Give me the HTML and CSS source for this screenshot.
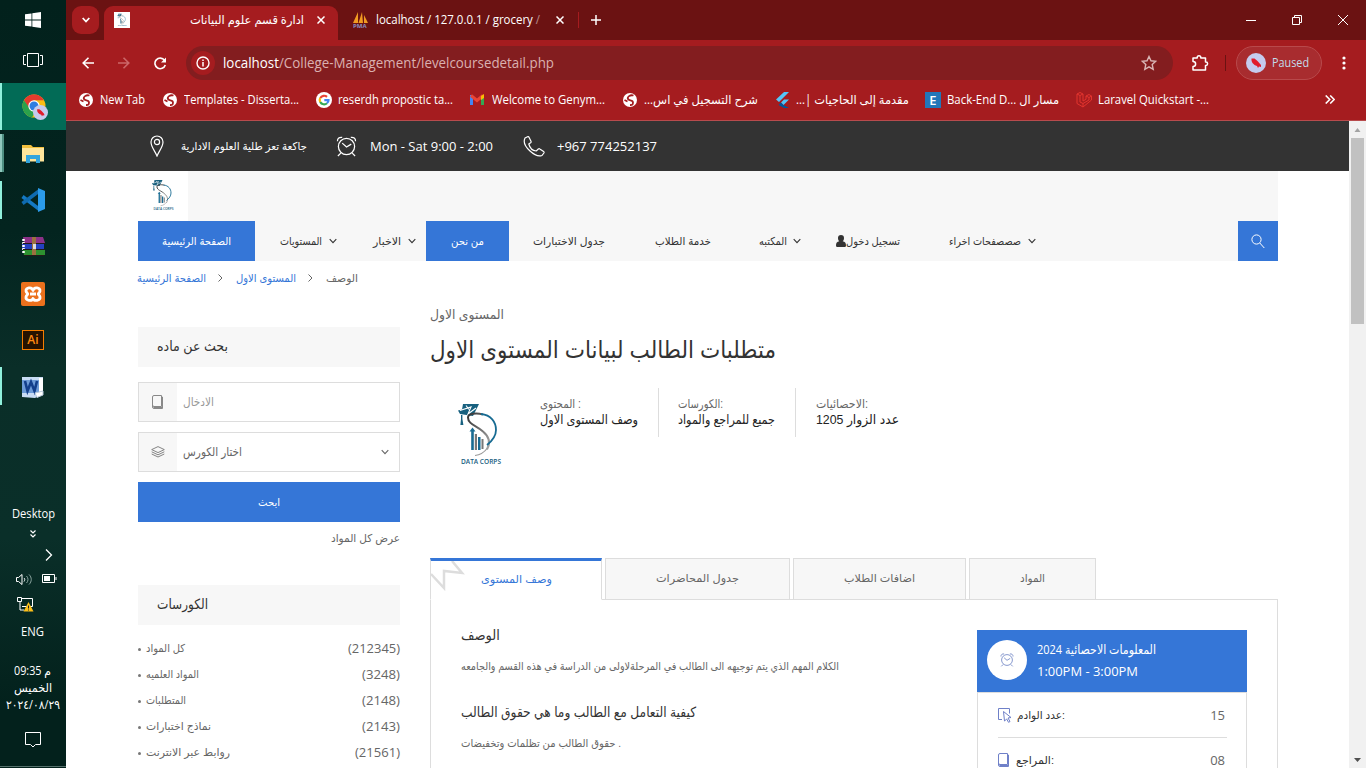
FILE: index.html
```html
<!DOCTYPE html>
<html lang="en">
<head>
<meta charset="utf-8">
<title>ادارة قسم علوم البيانات</title>
<link rel="stylesheet" href="styles.css">
</head>
<body>
<svg class="defs" width="0" height="0">
  <defs>
    <linearGradient id="grey" x1="0" x2="1" y2="1"><stop offset="0" stop-color="#333"/><stop offset="1" stop-color="#aaa"/></linearGradient>
    <symbol id="corps" viewBox="0 0 100 100">
      <path fill="#17607f" d="M33 18h16l-6 12-13-2-2-3.500 4-1z"/>
      <path fill="none" stroke="#fff" stroke-width="1.100" d="M30 24.500l11-3.500-3 7 8-6M36 19.500l3 4"/>
      <path fill="#17607f" d="M31 29h1.400v4l1 6h-3l.6-6z"/>
      <path fill="none" stroke="url(#grey)" stroke-width="2" d="M53 28.500c-7-2-15-1-15 3 0 7 9 8 15 14 6 5 8 11 4 18"/>
      <path fill="none" stroke="#999" stroke-width="1.200" d="M57.500 62c-3 4-7 7-12.500 7.500"/>
      <path fill="none" stroke="#176b92" stroke-width="1.800" d="M51 28c10 1 15 8 15 16 0 6-4 11-9 15"/>
      <path fill="#176b92" d="M42.500 41.500l-3 4h1.700V64h2.600V45.500h1.700zM48 51h2.500v13H48z"/>
      <path fill="#777" d="M44.800 48h2.200v16h-2.200zM51.500 53h2v10h-2z"/>
      <text x="31" y="77.700" font-family="Open Sans" font-weight="600" font-size="6.800" textLength="40" lengthAdjust="spacingAndGlyphs" fill="#17607f">DATA CORPS</text>
    </symbol>
    <symbol id="globe" viewBox="0 0 14 14">
      <circle cx="7" cy="7" r="7" fill="#fff"/>
      <path fill="none" stroke="#a51c1f" stroke-width="1.800" d="M10.500 2.500C7 1.500 4 4 5 6s5 .5 5 3.500-2 2.500-3 2.500M1.500 7l3 1.500"/>
    </symbol>
    <symbol id="clock" viewBox="0 0 22 22">
      <g fill="none" stroke="currentColor" stroke-width="1.300"><circle cx="11" cy="11" r="8.500"/><path d="M1.500 5.500c0-3 2-4.500 5-4M20.500 5.500c0-3-2-4.500-5-4M5 18l-3 3M17 18l3 3M6.500 7.500l4.500 4 5-3"/></g>
    </symbol>
    <symbol id="book" viewBox="0 0 12 14">
      <path fill="none" stroke="currentColor" d="M2 .5h7.500v11H2A1.500 1.500 0 0 1 .5 10V2A1.500 1.500 0 0 1 2 .5zM9.500 2h1v11.500H2A1.500 1.500 0 0 1 .5 12v-2M1.500 12.500h9"/>
    </symbol>
    <symbol id="down" viewBox="0 0 8 6"><path fill="none" stroke="currentColor" stroke-width="1.100" d="M.7 1.200L4 4.600l3.300-3.400"/></symbol>
    <symbol id="bird" viewBox="0 0 20 20"><circle cx="10" cy="10" r="10" fill="#c5cbee"/><path fill="#e11c2c" d="M5.500 5.500l3 0 3 2.500 3.500 4 0 2-2-.5-1 1.500-1-2c-3.500-1-6-4-5.500-7.500z"/></symbol>
    <symbol id="times" viewBox="0 0 8 8"><path stroke="currentColor" stroke-width="1.500" d="M.5.5l7 7M7.500.5l-7 7"/></symbol>
  </defs>
</svg>

<div class="desktop">
  <aside class="taskbar">
    <div class="sys"><svg width="16" height="16" viewBox="0 0 16 16"><path fill="#fff" d="M0 2.300L6.500 1.400v6.200H0zM7.300 1.300L16 0v7.600H7.300zM0 8.400h6.500v6.200L0 13.700zM7.300 8.400H16V16l-8.700-1.300z"/></svg></div>
    <div class="sys"><svg width="20" height="14" viewBox="0 0 20 14"><path fill="none" stroke="#fff" d="M4.500.5h11v13h-11zM3 2.500H.5v9H3M17 2.500h2.500v9H17"/></svg></div>
    <div class="app on"><svg width="26" height="26" viewBox="0 0 26 26"><circle cx="12" cy="12" r="11.500" fill="#f9bd14"/><path fill="#e33b2e" d="M2 6.300A11.500 11.500 0 0 1 22 6.300H12L7 15z"/><path fill="#2ba24c" d="M2 6.300L8 15l6 2-4 6.400A11.500 11.500 0 0 1 2 6.300z"/><circle cx="12" cy="12" r="5.700" fill="#fff"/><circle cx="12" cy="12" r="4.500" fill="#2f7de1"/><use href="#bird" x="11" y="11" width="15" height="15"/></svg></div>
    <div class="app half"><svg width="22" height="18" viewBox="0 0 22 18"><path fill="#f2c03e" d="M0 0h9l2 2h11v14H0z"/><path fill="#ffe59b" d="M0 3h22v13.500H0z"/><path fill="#33a5dd" d="M4 18v-8h14v8h-4v-4H8v4z"/></svg></div>
    <div class="app run"><svg width="24" height="24" viewBox="0 0 24 24"><path fill="none" stroke="#1479c4" stroke-width="3.500" d="M1.500 8.500L18 21"/><path fill="none" stroke="#0f6bb0" stroke-width="3.500" d="M1.500 15.500L18 3"/><path fill="#2b9bea" d="M17 0l7 3v18l-7 3z"/></svg></div>
    <div class="app"><svg width="24" height="20" viewBox="0 0 24 20"><path fill="#8c3188" d="M2 0h20l2 6H3z"/><path fill="#2540bf" d="M1 7h22v6H1z"/><path fill="#2d9130" d="M2 13h22v5H3z"/><path stroke="#fff" stroke-width="2.500" stroke-dasharray="2 1" d="M2.500 2v15"/><path stroke="#241a18" d="M2 6.500h22M2 12.500h22M3 18.500h20"/><path fill="#9b7140" d="M11 0h4v18h-4z"/><path fill="#ddd" d="M12 7h3v5h-3z"/></svg></div>
    <div class="app"><svg width="24" height="24" viewBox="0 0 24 24"><rect width="24" height="24" rx="2" fill="#ec711d"/><path fill="none" stroke="#fff" stroke-width="2.800" stroke-linejoin="round" d="M12 8.500C11 4.500 4.500 5.500 5 9c.3 2 1.700 2 1.700 3S5.300 13 5 15c-.5 4 6 4.500 7 1.500 1 3 7.500 2.500 7-1.500-.3-2-1.700-2-1.700-3S18.700 11 19 9c.5-3.500-6-4.500-7-.5zM9 12h6"/></svg></div>
    <div class="app"><span class="ai">Ai</span></div>
    <div class="app run"><svg width="22" height="22" viewBox="0 0 22 22"><path fill="#c9dcf4" d="M0 1h21v17l-8 4-13-1z"/><path fill="#6e9cd8" d="M0 4h17v13H0z"/><path fill="#fff" d="M17 2h4v16h-4z"/><path fill="none" stroke="#133f8c" stroke-width="2.600" d="M3 5l2.500 10L9 6l3.500 9L15 5"/><path fill="#fff" stroke="#b9c9dc" d="M13 17l8-2v4l-6 2.500z"/></svg></div>
    <div class="tray">
      <div class="tr desk"><span class="fit" data-w="43">Desktop</span></div>
      <div class="tr chev"><svg width="6" height="8" viewBox="0 0 6 8"><path fill="none" stroke="#fff" stroke-width="1.200" d="M.5.5L3 3 5.500.5M.5 4.500L3 7l2.500-2.500"/></svg></div>
      <div class="tr more"><svg width="8" height="12" viewBox="0 0 8 12"><path fill="none" stroke="#fff" stroke-width="1.300" d="M1 .5L6.500 6 1 11.500"/></svg></div>
      <div class="tr pair"><svg width="17" height="13" viewBox="0 0 17 13"><path fill="none" stroke="#fff" d="M.5 4.500h2L6 1.500v10l-3.500-3h-2z"/><path fill="none" stroke="#fff" d="M8 5c1 1 1 2 0 3.500"/><path fill="none" stroke="#8ba5a0" d="M10.500 3c2 2 2 5 0 7M13 1.500c3 3 3 7 0 10"/></svg><svg width="15" height="10" viewBox="0 0 15 10"><path fill="none" stroke="#fff" d="M.5.5h12v8H.5zM14 3v3"/><path fill="#fff" d="M2 2h6v5H2z"/></svg></div>
      <div class="tr net"><svg width="17" height="15" viewBox="0 0 17 15"><path fill="none" stroke="#fff" d="M5 1.500h10.500v8H5M3 5v8h4M.5.500h4v4h-4z"/><path fill="#fcc01a" d="M11.500 5l5 9.500h-10z"/><path stroke="#222" d="M11.500 8.500v3M11.500 12.500v1"/></svg></div>
      <div class="tr eng"><span class="fit" data-w="23">ENG</span></div>
      <div class="tr time"><span class="fit" data-w="37">09:35 م</span></div>
      <div class="tr day"><span class="fit" data-w="38">الخميس</span></div>
      <div class="tr date"><span class="fit" data-w="54">٢٠٢٤/٠٨/٢٩</span></div>
      <div class="tr note"><svg width="16" height="16" viewBox="0 0 16 16"><path fill="none" stroke="#fff" d="M.5.500h15v12h-5L8 15l-2.500-2.500h-5z"/></svg></div>
    </div>
  </aside>

  <main class="browser">
    <header class="tabstrip">
      <span class="tabmenu"><svg width="8" height="6"><path d="M.7 1l3.300 3.500L7.300 1" fill="none" stroke="#fff" stroke-width="1.800"/></svg></span>
      <div class="tab"><span class="fav"><svg width="16" height="16" viewBox="15 10 70 75"><use href="#corps" width="100" height="100"/></svg></span><span class="tabtitle"><span class="fit" data-w="114">ادارة قسم علوم البيانات</span></span><svg width="8" height="8"><use href="#times"/></svg></div>
      <div class="tab2"><svg width="17" height="16" viewBox="0 0 17 16"><path fill="#f19b22" d="M6 0L1 11h5zM10 0L6.500 11H11zM12 3l0 8h4z"/><text x="1" y="16" font-family="Open Sans" font-size="6" font-weight="700" fill="#8a8fc0">PMA</text></svg><span class="grocery"><span class="fit" data-w="164">localhost / 127.0.0.1 / grocery <i>/</i></span></span><svg width="8" height="8"><use href="#times"/></svg></div>
      <span class="divide"></span>
      <span class="newtab"><svg width="10" height="10"><path stroke="#fff" stroke-width="1.500" d="M5 0v10M0 5h10"/></svg></span>
      <div class="winctl"><svg width="10" height="10"><path stroke="#fff" d="M0 5.500h10"/></svg><svg width="10" height="10"><path fill="none" stroke="#fff" d="M.5 2.500h7v7h-7zM2.500 2V.5h7v7H8"/></svg><svg width="10" height="10"><path stroke="#fff" d="M0 0l10 10M10 0L0 10"/></svg></div>
    </header>
    <div class="toolbar">
      <div class="navbtns">
        <svg width="12" height="12"><path fill="none" stroke="#fff" stroke-width="1.600" d="M12 6H1.500M6.500.7L1.200 6l5.300 5.300"/></svg>
        <svg width="12" height="12"><path fill="none" stroke="#cb6768" stroke-width="1.600" d="M0 6h10.500M5.500.7L10.800 6l-5.300 5.300"/></svg>
        <svg width="13" height="13"><path fill="none" stroke="#fff" stroke-width="1.600" d="M10.500 3.200A5.300 5.300 0 1 0 11.300 8"/><path fill="#fff" d="M12 .5V5.500H7z"/></svg>
      </div>
      <div class="omnibox">
        <span class="info"><svg width="14" height="14"><circle cx="7" cy="7" r="6" fill="none" stroke="#fff" stroke-width="1.400"/><path stroke="#fff" stroke-width="1.500" d="M7 6v4.500M7 3.500V5"/></svg></span>
        <span class="fit url" data-w="331"><b>localhost</b>/College-Management/levelcoursedetail.php</span>
        <svg class="star" width="16" height="16" viewBox="0 0 16 16"><path fill="none" stroke="#d9b5b5" stroke-width="1.400" d="M8 1.500l2 4.300 4.700.5-3.500 3.200 1 4.800L8 11.800l-4.200 2.500 1-4.800L1.300 6.300 6 5.800z"/></svg>
      </div>
      <svg class="puzzle" width="18" height="18" viewBox="0 0 18 18"><path fill="none" stroke="#fff" stroke-width="1.500" stroke-linejoin="round" d="M2 4h4.200V3.500a1.800 1.800 0 0 1 3.600 0V4H14.500v4h.4a1.700 1.700 0 0 1 0 3.400h-.4V16H2v-3.500c3.500 0 3.500-5 0-5z"/></svg>
      <span class="vsep"></span>
      <div class="pill"><svg width="20" height="20"><use href="#bird"/></svg><span class="fit" data-w="37">Paused</span></div>
      <svg class="dots" width="4" height="14"><circle cx="2" cy="2" r="1.600" fill="#fff"/><circle cx="2" cy="7" r="1.600" fill="#fff"/><circle cx="2" cy="12" r="1.600" fill="#fff"/></svg>
    </div>
    <nav class="bookmarks">
      <div class="bm b1"><svg width="14" height="14"><use href="#globe"/></svg><span class="fit" data-w="45">New Tab</span></div>
      <div class="bm b2"><svg width="14" height="14"><use href="#globe"/></svg><span class="fit" data-w="115">Templates - Disserta...</span></div>
      <div class="bm b3"><svg width="16" height="16"><circle cx="8" cy="8" r="8" fill="#fff"/><g fill="none" stroke-width="2.200"><path stroke="#ea4335" d="M4.300 6A4.400 4.400 0 0 1 11 4.800"/><path stroke="#fbbc05" d="M4.200 10a4.400 4.400 0 0 1 0-4"/><path stroke="#34a853" d="M11 11.200A4.400 4.400 0 0 1 4.200 10"/><path stroke="#4285f4" d="M8.300 8.200h4.200c0 1-.6 2.300-1.500 3"/></g></svg><span class="fit" data-w="115">reserdh propostic ta...</span></div>
      <div class="bm b4"><svg width="14" height="11"><path fill="#4285f4" d="M0 1h3v10H0z"/><path fill="#34a853" d="M11 1h3v10h-3z"/><path fill="none" stroke="#ea4335" stroke-width="3" d="M1 1.500l6 5 6-5"/><path fill="#fbbc04" d="M11 2l3-2v4l-3 2z"/></svg><span class="fit" data-w="113">Welcome to Genym...</span></div>
      <div class="bm b5"><svg width="14" height="14"><use href="#globe"/></svg><span class="fit" dir="rtl" data-w="114">شرح التسجيل في اس...</span></div>
      <div class="bm b6"><svg width="13" height="16"><path fill="#54c5f8" d="M8 0h5L3 10 0 7.500zM8 7.500h5L7.500 13 5 10.500z"/><path fill="#01579b" d="M5 10.500L7.500 13l0 0 5.500 3H8l-5.500-3z"/></svg><span class="fit" dir="rtl" data-w="113">مقدمة إلى الحاجيات |...</span></div>
      <div class="bm b7"><span class="eicon">E</span><span class="fit" data-w="112">Back-End D... مسار ال</span></div>
      <div class="bm b8"><svg width="16" height="16"><path fill="none" stroke="#e3342f" stroke-width="1" d="M1 2l3-1.500L7 2v7l3-1.700V4l3-1.500L15.500 4v4L7 15l-6-3.500zM1 2l3 1.500L7 2M4 3.500V10l3 1.500 6-3.500V5.500L10 4M13 5.500L15.500 4M7 11.500V15"/></svg><span class="fit" data-w="111">Laravel Quickstart -...</span></div>
      <svg class="rr" width="10" height="9"><path fill="none" stroke="#fff" stroke-width="1.600" d="M.7.500l4 4-4 4M5.200.500l4 4-4 4"/></svg>
    </nav>

    <div class="viewport">
      <div class="site">
        <div class="topbar"><div class="wrap">
          <div class="ti pin"><svg width="14" height="22" viewBox="0 0 14 22"><g fill="none" stroke="#fff" stroke-width="1.200"><path d="M7 21C5 16 1 12 1 7a6 6 0 0 1 12 0c0 5-4 9-6 14z"/><circle cx="7" cy="7" r="2.600"/></g></svg><span class="fit ar" data-w="126">جاكعة تعز طلية العلوم الادارية</span></div>
          <div class="ti hrs"><svg width="21" height="21"><use href="#clock"/></svg><span class="fit" data-w="123">Mon - Sat 9:00 - 2:00</span></div>
          <div class="ti tel"><svg width="22" height="21" viewBox="0 0 22 21"><path fill="none" stroke="#fff" stroke-width="1.200" d="M2 2l2.500-1.300c.8-.3 1.200 0 1.500.6l2 4c.3.800 0 1.200-.4 1.500L5.800 8c1 4 4.200 6.700 7.500 7l2-2c.5-.4 1-.5 1.500-.1l3.800 2.600c.6.500.6 1 .3 1.500l-2 2.500C13 22-2 10 2 2z"/></svg><span class="fit" data-w="100">+967 774252137</span></div>
        </div></div>
        <div class="wrap">
          <div class="brand"><span class="logo"><svg width="50" height="50"><use href="#corps"/></svg></span></div>
          <nav class="menu ar">
            <a class="m1 blue"><span class="fit" data-w="69">الصفحة الرئيسية</span></a>
            <a class="m2"><span class="fit" data-w="42">المستويات</span><svg width="8" height="6"><use href="#down"/></svg></a>
            <a class="m3"><span class="fit" data-w="28">الاخبار</span><svg width="8" height="6"><use href="#down"/></svg></a>
            <a class="m4 blue"><span class="fit" data-w="33">من نحن</span></a>
            <a class="m5"><span class="fit" data-w="72">جدول الاختبارات</span></a>
            <a class="m6"><span class="fit" data-w="56">خدمة الطلاب</span></a>
            <a class="m7"><span class="fit" data-w="28">المكتبه</span><svg width="8" height="6"><use href="#down"/></svg></a>
            <a class="m8"><svg width="10" height="12"><path fill="#333" d="M2 3a3 3 0 0 1 6 0c0 1.500-.5 2.600-1.300 3.200C9 6.500 10 8 10 10.500c0 1-.8 1.500-1.500 1.500h-7C.8 12 0 11.500 0 10.500 0 8 1 6.500 3.300 6.200 2.500 5.600 2 4.500 2 3z"/></svg><span class="fit" data-w="54">تسجيل دخول</span></a>
            <a class="m9"><span class="fit" data-w="72">صصصفحات اخراء</span><svg width="8" height="6"><use href="#down"/></svg></a>
            <a class="search blue"><svg width="14" height="15"><g fill="none" stroke="#fff"><circle cx="5.500" cy="5.500" r="4.600"/><path d="M8.800 9l4.500 5"/></g></svg></a>
          </nav>
          <div class="crumbs ar"><a class="fit" data-w="69">الصفحة الرئيسية</a><svg width="5" height="8"><path d="M.5.500L4 4 .5 7.500" fill="none" stroke="#666"/></svg><a class="fit" data-w="60">المستوى الاول</a><svg width="5" height="8"><path d="M.5.500L4 4 .5 7.500" fill="none" stroke="#666"/></svg><span class="fit" data-w="32">الوصف</span></div>
          <div class="columns">
            <aside class="side">
              <h4 class="ar"><span class="fit" data-w="71">بحث عن ماده</span></h4>
              <div class="field"><span class="fi"><svg width="12" height="14"><use href="#book"/></svg></span><span class="fit ar hint" data-w="31">الادخال</span></div>
              <div class="field sel"><span class="fi"><svg width="14" height="12" viewBox="0 0 14 12"><path fill="none" stroke="#777" stroke-width=".9" d="M7 .6l6.300 3L7 6.600.7 3.600zM.7 5.800l6.300 3 6.300-3M.7 8l6.300 3 6.300-3"/></svg></span><span class="fit ar" data-w="59">اختار الكورس</span><svg class="caret" width="8" height="6"><use href="#down"/></svg></div>
              <div class="btn ar"><span class="fit" data-w="22">ابحث</span></div>
              <div class="all ar"><span class="fit" data-w="69">عرض كل المواد</span></div>
              <h4 class="ar second"><span class="fit" data-w="51">الكورسات</span></h4>
              <ul>
                <li><span class="fit ar" data-w="39">كل المواد</span><em class="fit" data-w="52">(212345)</em></li>
                <li><span class="fit ar" data-w="53">المواد العلميه</span><em class="fit" data-w="38">(3248)</em></li>
                <li><span class="fit ar" data-w="40">المتطلبات</span><em class="fit" data-w="38">(2148)</em></li>
                <li><span class="fit ar" data-w="65">نماذج اختبارات</span><em class="fit" data-w="38">(2143)</em></li>
                <li><span class="fit ar" data-w="84">روابط عبر الانترنت</span><em class="fit" data-w="45">(21561)</em></li>
              </ul>
            </aside>
            <section class="content">
              <div class="kicker ar"><span class="fit" data-w="74">المستوى الاول</span></div>
              <h1 class="ar"><span class="fit" data-w="346">متطلبات الطالب لبيانات المستوى الاول</span></h1>
              <div class="meta">
                <svg width="100" height="100"><use href="#corps"/></svg>
                <div class="mc c1 ar"><span class="fit" data-w="41">المحتوى :</span><strong class="fit" data-w="98">وصف المستوى الاول</strong></div>
                <div class="mc c2 ar"><span class="fit" data-w="45">الكورسات:</span><strong class="fit" data-w="97">جميع للمراجع والمواد</strong></div>
                <div class="mc c3 ar"><span class="fit" data-w="52">الاحصائيات:</span><strong class="fit" data-w="83">عدد الزوار 1205</strong></div>
              </div>
              <div class="tabs ar">
                <div class="tb t1"><svg class="zig" width="34" height="30"><path fill="none" stroke="#ddd" stroke-width="2.500" d="M0 13l13 14V10l18 2L21 0"/></svg><span class="fit" data-w="71">وصف المستوى</span></div>
                <div class="tb t2"><span class="fit" data-w="83">جدول المحاضرات</span></div>
                <div class="tb t3"><span class="fit" data-w="71">اضافات الطلاب</span></div>
                <div class="tb t4"><span class="fit" data-w="25">المواد</span></div>
              </div>
              <div class="panel">
                <article class="ar">
                  <h5><span class="fit" data-w="39">الوصف</span></h5>
                  <p><span class="fit" data-w="378">الكلام المهم الذي يتم توجيهه الى الطالب في المرحلةلاولى من الدراسة في هذه القسم والجامعه</span></p>
                  <h5><span class="fit" data-w="235">كيفية التعامل مع الطالب وما هي حقوق الطالب</span></h5>
                  <p><span class="fit" data-w="160">حقوق الطالب من تظلمات وتخفيضات .</span></p>
                </article>
                <div class="card">
                  <div class="chead"><span class="round"><svg width="14" height="14"><use href="#clock"/></svg></span><div><span class="fit" data-w="119">المعلومات الاحصائية 2024</span><span class="fit" data-w="101">1:00PM - 3:00PM</span></div></div>
                  <div class="crow"><svg width="14" height="15"><path fill="none" stroke="#6f80c8" d="M4 11.500H.5v-11h11v5M5.500 3.500l7.500 6-3 .5 2 3.500-1.500.8-1.800-3.300-2.200 2z"/></svg><span class="fit ar" data-w="48">عدد الوادم:</span><em>15</em></div>
                  <div class="crow"><svg width="12" height="14"><use href="#book"/></svg><span class="fit ar" data-w="38">المراجع:</span><em>08</em></div>
                </div>
              </div>
            </section>
          </div>
        </div>
      </div>
      <div class="scroll"><svg width="17" height="17"><path fill="#a3a3a3" d="M5.500 11h6L8.500 7z"/></svg><span class="thumb"></span><svg width="17" height="17"><path fill="#505050" d="M5 7h7l-3.500 4z"/></svg></div>
    </div>
  </main>
</div>
<script src="fit.js"></script>
</body>
</html>
```
FILE: styles.css
```css
* { box-sizing: border-box; }
body { margin: 0; width: 1366px; height: 768px; overflow: hidden; font: 13px/16px "Open Sans", "DejaVu Sans", sans-serif; color: #666; }
svg { flex: none; display: block; }
.defs { position: absolute; }
.fit { display: inline-block; flex: none; white-space: nowrap; transform-origin: 0 50%; }
.ar { font-family: "Liberation Sans", "DejaVu Sans", sans-serif; font-size: 11px; }
h1, h4, h5, p, ul { margin: 0; padding: 0; font-weight: 400; }
em, strong, i { font-style: normal; font-weight: 400; }
.desktop { display: flex; height: 768px; }

.taskbar { width: 66px; flex: none; background: linear-gradient(#02211c 0, #03241f 30%, #0a2e28 48%, #0a2f29 70%, #03211c 92%); color: #fff; }
.sys { height: 40px; display: grid; place-items: center; }
.app { height: 46.700px; display: grid; place-items: center; }
.app svg, .app .ai { margin-top: 1px; }
.app.on { margin-top: 3px; background: #026b56; box-shadow: inset 2px 0 #90f0dc; }
.app.on svg { margin: 2px 0 0 3px; }
.app.run { background: linear-gradient(#90f0dc, #90f0dc) 0 50% / 2px 38px no-repeat; }
.app.half { background: linear-gradient(90deg, #90c8bd 2px, #4e8f82 2px) 0 50% / 4px 38px no-repeat; }
.ai { width: 22px; height: 20px; border: 1px solid #f57d00; background: #261300; color: #ff8a10; font: 600 12px/18px "Open Sans"; text-align: center; }
.tray { padding-top: 95px; font-size: 12px; }
.tr { height: 20px; display: flex; justify-content: center; align-items: center; }
.desk { height: 18px; }
.chev { height: 22px; padding-right: 1px; }
.more { padding-left: 32px; height: 20px; }
.pair { gap: 9px; padding-left: 7px; height: 29px; }
.net { height: 22px; padding-right: 16px; }
.eng { height: 32px; padding-right: 1px; }
.time { height: 17px; margin-top: 15px; padding-right: 2px; }
.day, .date { height: 17px; padding-right: 1px; }
.note { height: 53px; border-bottom: 1px solid #56716c; }

.browser { width: 1300px; background: #a51c1f; color: #fff; }
.tabstrip { height: 40px; background: #6b1212; display: flex; align-items: flex-start; padding: 6px 0 0 6px; }
.tabmenu { width: 27px; height: 28px; border-radius: 9px; background: #a51c1f; display: grid; place-items: center; }
.tab { width: 234px; height: 34px; margin-left: 5px; background: #a51c1f; border-radius: 9px 9px 0 0; display: flex; align-items: center; padding: 0 11px 6px 10px; }
.fav { width: 16px; height: 16px; background: #fff; }
.tabtitle { width: 174px; margin-right: 13px; text-align: right; font-size: 12px; }
.tab2 { width: 240px; height: 28px; display: flex; align-items: center; padding-left: 14px; font-size: 12px; }
.divide { width: 1px; height: 16px; margin-top: 6px; background: #a51c1f; }
.grocery { width: 187px; padding-left: 7px; }
.grocery i { opacity: .5; }
.newtab { width: 34px; height: 28px; display: grid; place-items: center; }
.winctl { margin-left: auto; height: 28px; display: flex; align-items: center; gap: 36px; padding-right: 18px; }
.toolbar { height: 46px; display: flex; align-items: center; }
.navbtns { display: flex; gap: 24px; padding-left: 16px; width: 120px; }
.omnibox { width: 987px; height: 34px; border-radius: 17px; background: #831d1f; display: flex; align-items: center; padding: 0 16px 0 5px; font-size: 14px; color: #dab0b0; }
.omnibox b { color: #fff; font-weight: 400; }
.info { width: 24px; height: 24px; border-radius: 50%; background: #a51c1f; display: grid; place-items: center; margin-right: 8px; }
.star { margin-left: auto; }
.puzzle { margin-left: 18px; }
.vsep { width: 1px; height: 16px; background: #6b1212; margin-left: 16px; }
.pill { width: 86px; height: 34px; margin-left: 10px; border: 1px solid #b8494b; border-radius: 17px; background: #a82c2f; display: flex; align-items: center; gap: 6px; padding-left: 9px; color: #c3dcea; font-size: 12px; }
.dots { margin-left: 20px; }
.bookmarks { height: 35px; padding: 0 0 7px 13px; display: flex; align-items: center; font-size: 12px; border-bottom: 1px solid #b84b4d; }
.bm { display: flex; align-items: center; gap: 7px; flex: none; }
.b1 { width: 84px; } .b2 { width: 153px; } .b3 { width: 154px; gap: 6px; } .b4 { width: 153px; gap: 8px; }
.b5 { width: 153px; } .b6 { width: 149px; } .b7 { width: 151px; gap: 6px; } .b8 { width: 249px; gap: 6px; }
.eicon { width: 16px; height: 16px; background: #2276b9; text-align: center; font-weight: 600; font-size: 13px; line-height: 16px; }

.viewport { height: 647px; display: flex; background: #fff; color: #666; }
.site { width: 1283px; overflow: hidden; }
.scroll { width: 17px; background: #f1f1f1; display: flex; flex-direction: column; }
.thumb { flex: none; width: 13px; margin: 0 2px 427px; height: 186px; background: #c1c1c1; }
.wrap { width: 1140px; margin-left: 72px; }
.topbar { background: #333; height: 50px; color: #fff; }
.topbar .wrap { display: flex; height: 50px; }
.ti { display: flex; align-items: center; }
.pin { padding-left: 12px; gap: 17px; width: 198px; }
.hrs { gap: 13px; width: 187px; }
.tel { gap: 12px; }
.brand { height: 50px; background: #f7f7f7; }
.logo { display: block; width: 50px; height: 50px; background: #fff; }
.menu { height: 40px; background: #f7f7f7; display: flex; color: #333; }
.menu a { height: 40px; display: flex; align-items: center; flex: none; }
.menu .blue { background: #3576d7; color: #fff; justify-content: center; }
.m1 { width: 117px; }
.m2 { width: 118px; padding-left: 25px; gap: 7px; }
.m3 { width: 53px; gap: 7px; }
.m4 { width: 83px; }
.m5 { width: 146px; padding-left: 24px; }
.m6 { width: 104px; }
.m7 { width: 77px; gap: 6px; }
.m8 { width: 113px; }
.m9 { gap: 7px; }
.menu .search { width: 40px; margin-left: auto; }
.crumbs { height: 34px; display: flex; align-items: center; margin-left: -1px; }
.crumbs svg { margin: 0 13px 0 12px; }
.crumbs a { color: #3576d7; }
.columns { display: flex; gap: 30px; }
.side { width: 262px; padding-top: 32px; }
h4.ar { height: 40px; background: #f7f7f7; padding: 11px 19px; font-size: 14px; color: #333; }
.field { height: 40px; border: 1px solid #ddd; margin-top: 15px; display: flex; align-items: center; }
.field.sel { margin-top: 10px; }
.fi { width: 38px; height: 38px; background: #f7f7f7; display: grid; place-items: center; margin-right: 6px; color: #888; }
.field .ar { font-size: 12px; }
.field .hint { color: #999; }
.caret { margin-left: auto; margin-right: 10px; }
.btn { height: 40px; margin-top: 10px; background: #3576d7; color: #fff; display: grid; place-items: center; }
.all { text-align: right; height: 32px; padding-top: 8px; }
.second { margin-top: 31px; }
ul { list-style: none; padding-top: 10px; }
li { height: 26px; display: flex; align-items: center; }
li::before { content: ""; width: 3px; height: 3px; border-radius: 50%; background: #777; margin: 3px 5px 0 0; }
li em { margin-left: auto; }
.content { width: 848px; padding-top: 12px; }
.kicker.ar { font-size: 13px; height: 16px; }
h1.ar { font-size: 24px; line-height: 36px; height: 36px; margin-top: 9px; color: #333; }
.meta { display: flex; height: 201px; padding-top: 20px; }
.mc { height: 49px; padding-top: 8px; display: flex; flex-direction: column; align-items: flex-start; }
.mc.ar { font-size: 12px; }
.mc strong { color: #222; font-size: 13px; }
.mc.c1 { width: 129px; padding-left: 10px; border-right: 1px solid #ddd; }
.mc.c2 { width: 137px; padding-left: 19px; border-right: 1px solid #ddd; }
.mc.c3 { padding-left: 20px; }
.meta svg { margin-top: -2px; }
.tabs { display: flex; gap: 3px; height: 42px; margin-top: -11px; position: relative; z-index: 1; margin-bottom: -1px; }
.tb { height: 42px; border: 1px solid #ddd; background: #f7f7f7; display: grid; place-items: center; position: relative; padding-bottom: 2px; }
.t1 { width: 172px; border-top: 3px solid #3576d7; border-bottom-color: #fff; background: #fff; color: #3576d7; padding-bottom: 3px; }
.zig { position: absolute; left: 0; top: 0; }
.t2 { width: 185px; } .t3 { width: 173px; } .t4 { width: 127px; }
.panel { border: 1px solid #ddd; height: 300px; display: flex; justify-content: space-between; padding: 30px 30px 0; }
article h5 { font-size: 14px; line-height: 16px; color: #333; height: 29px; margin-top: -3px; }
article p { font-size: 11px; height: 51px; padding-top: 2px; }
.card { width: 270px; }
.chead { background: #3576d7; color: #fff; height: 62px; display: flex; padding: 10px; gap: 10px; }
.chead div { display: flex; flex-direction: column; gap: 6px; align-items: flex-start; padding-top: 2px; }
.chead .fit { font-size: 12.500px; }
.round { width: 40px; height: 40px; border-radius: 50%; background: #fff; color: #6d83c4; display: grid; place-items: center; }
.crow { height: 45px; border: solid #ddd; border-width: 1px 1px 0; display: flex; align-items: center; padding: 0 21px 0 20px; gap: 5px; color: #333; }
.crow svg { color: #6f80c8; }
.crow em { margin-left: auto; color: #666; }
.crow + .crow { border-top: 0; background: linear-gradient(#ddd, #ddd) 20px 0 / 229px 1px no-repeat; gap: 6px; }
```
FILE: fit.js
```js
// Condense or widen each label to the width its slot reserves.
document.querySelectorAll('.fit').forEach(function (el) {
  var natural = el.getBoundingClientRect().width;
  var target = Number(el.dataset.w);
  el.style.transform = 'scaleX(' + target / natural + ')';
  el.style.marginRight = target - natural + 'px';
});
```
